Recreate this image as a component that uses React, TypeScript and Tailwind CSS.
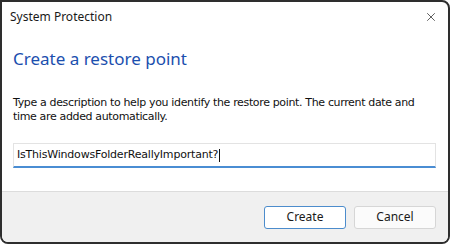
import { X } from 'lucide-react';

export default function App() {
  return (
    <div className="w-[450px] h-[244px] bg-white">
      <div className="w-full h-full flex flex-col bg-white border-l-2 border-t-2 border-r-2 border-b-2 border-[#2e2e2e] rounded-tr-[8px] rounded-b-[8px] overflow-hidden">
        {/* Title bar */}
        <div className="h-[30px] flex items-center justify-between pl-[8px] pr-[10px]">
          <span className="text-[12px] text-[#1a1a1a] font-['Segoe_UI','Noto_Sans',sans-serif]">
            System Protection
          </span>
          <X size={14} strokeWidth={1.2} className="text-[#1a1a1a]" />
        </div>

        {/* Content */}
        <div className="flex-1 flex flex-col px-[11px] bg-white">
          <h1 className="mt-[15px] text-[17px] leading-[24px] text-[#1b4fae] font-['Segoe_UI','Noto_Sans',sans-serif]">
            Create a restore point
          </h1>
          <p className="mt-[25px] text-[11px] leading-[14px] tracking-[-0.35px] text-[#111] font-['Tahoma','DejaVu_Sans',sans-serif]">
            Type a description to help you identify the restore point. The current date and time are added automatically.
          </p>
          <div className="mt-[19px] mr-[1px] h-[25px] flex items-center border border-[#e3e3e3] border-b-2 border-b-[#4a8dd3] px-[3px]">
            <span className="text-[11px] tracking-[-0.2px] text-[#111] font-['Tahoma','DejaVu_Sans',sans-serif]">
              IsThisWindowsFolderReallyImportant?
            </span>
            <span className="ml-px w-px h-[13px] bg-[#111]" />
          </div>
        </div>

        {/* Footer */}
        <div className="h-[51px] flex items-center justify-end gap-[8px] pr-[12px] bg-[#f0f0f0] border-t border-[#dcdcdc]">
          <button className="w-[82px] h-[23px] rounded-[3px] bg-white border border-[#4c8ccc] text-[12px] text-[#1a1a1a] font-['Segoe_UI','Noto_Sans',sans-serif]">
            Create
          </button>
          <button className="w-[82px] h-[23px] rounded-[3px] bg-[#fbfbfb] border border-[#d6d6d6] text-[12px] text-[#1a1a1a] font-['Segoe_UI','Noto_Sans',sans-serif]">
            Cancel
          </button>
        </div>
      </div>
    </div>
  );
}
